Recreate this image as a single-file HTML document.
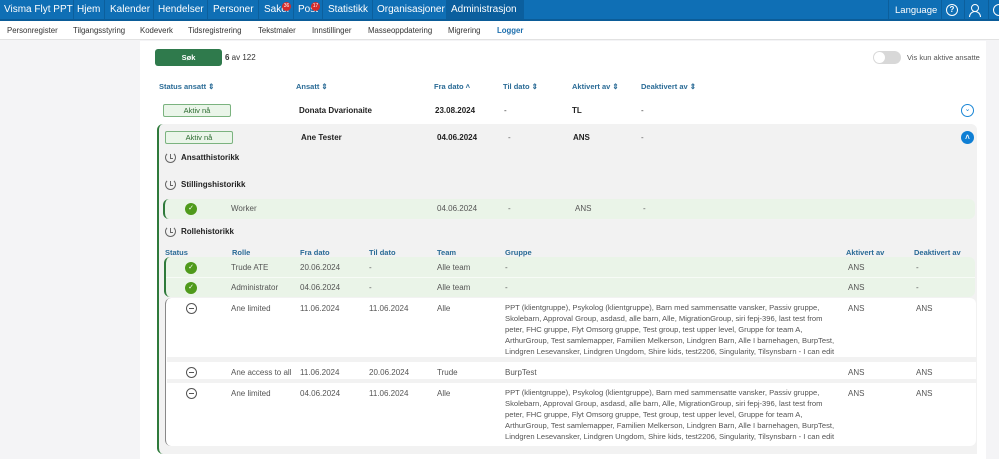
<!DOCTYPE html>
<html><head><meta charset="utf-8"><style>
*{margin:0;padding:0;box-sizing:border-box}
body{width:999px;height:459px;overflow:hidden;background:#f4f4f6;font-family:"Liberation Sans",sans-serif;font-size:8px;color:#333;position:relative}
.a{position:absolute;white-space:nowrap}
.nav{position:absolute;left:0;top:0;width:999px;height:21px;background:#0f6fb5;border-bottom:2px solid #0b5c98}
.nav span{position:absolute;top:4px;color:#fff;font-size:10px}
.sep{position:absolute;top:0;width:1px;height:19px;background:#0c5f9c}
.sub{position:absolute;left:0;top:21px;width:999px;height:19px;background:#fff;border-bottom:1px solid #e2e2e2}
.sub span{position:absolute;top:5px;font-size:7.8px;color:#333}
.main{position:absolute;left:140px;top:41px;width:846px;height:418px;background:#fff}
.h{color:#2a6b96;font-weight:bold;font-size:7.5px}
.b{font-weight:bold;color:#222}
.badge{position:absolute;height:13px;width:68px;border:1px solid #7bb37f;background:#eaf5e9;border-radius:2px;font-size:7.5px;color:#2b6a2f;text-align:center;line-height:11px}
.chk{position:absolute;width:12px;height:12px;border-radius:50%;background:#4f9a1b;color:#fff;font-size:7px;text-align:center;line-height:12px}
.min{position:absolute;width:11px;height:11px;border-radius:50%;border:1px solid #555;}
.min:after{content:"";position:absolute;left:2px;top:4px;width:5px;height:1px;background:#555}
.hist{position:absolute;width:11px;height:11px;border-radius:50%;border:1.3px solid #666;border-top-color:transparent}
.hist:after{content:"";position:absolute;left:4px;top:1px;width:2px;height:4px;border-left:1px solid #666;border-bottom:1px solid #666}
.g{color:#555}
</style></head><body>
<div class="nav">
<div class="a" style="left:446px;top:0;width:78px;height:19px;background:#0b5f9e"></div>
<div class="sep" style="left:73px"></div><div class="sep" style="left:104px"></div><div class="sep" style="left:153px"></div><div class="sep" style="left:207px"></div><div class="sep" style="left:258px"></div><div class="sep" style="left:293px"></div><div class="sep" style="left:322px"></div><div class="sep" style="left:372px"></div><div class="sep" style="left:446px"></div><div class="sep" style="left:888px"></div><div class="sep" style="left:941px"></div><div class="sep" style="left:964px"></div><div class="sep" style="left:988px"></div>
<span style="left:4px">Visma Flyt PPT</span><span style="left:77px">Hjem</span><span style="left:110px">Kalender</span><span style="left:158px">Hendelser</span><span style="left:213px">Personer</span><span style="left:264px">Saker</span><span style="left:298px">Post</span><span style="left:328px">Statistikk</span><span style="left:377px">Organisasjoner</span><span style="left:451px">Administrasjon</span>
<div class="a" style="left:282px;top:2px;width:9px;height:9px;border-radius:50%;background:#d42b2b;color:#fff;font-size:5px;text-align:center;line-height:9px">36</div>
<div class="a" style="left:311px;top:2px;width:9px;height:9px;border-radius:50%;background:#d42b2b;color:#fff;font-size:5px;text-align:center;line-height:9px">17</div>
<span style="left:895px;font-size:9.5px;top:5px">Language</span>
<div class="a" style="left:946px;top:4px;width:12px;height:12px;border:1.3px solid #fff;border-radius:50%;color:#fff;font-size:8px;text-align:center;line-height:10px;font-weight:bold">?</div>
<div class="a" style="left:971px;top:4px;width:8px;height:8px;border:1.3px solid #fff;border-radius:50%"></div>
<div class="a" style="left:969px;top:11px;width:12px;height:6px;border:1.3px solid #fff;border-radius:6px 6px 0 0;border-bottom:none"></div>
<div class="a" style="left:993px;top:4px;width:12px;height:12px;border:1.3px solid #fff;border-radius:50%"></div>
</div>
<div class="sub">
<span style="left:7px">Personregister</span><span style="left:73px">Tilgangsstyring</span><span style="left:140px">Kodeverk</span><span style="left:188px">Tidsregistrering</span><span style="left:258px">Tekstmaler</span><span style="left:312px">Innstillinger</span><span style="left:368px">Masseoppdatering</span><span style="left:448px">Migrering</span><span style="left:497px;color:#1d6fae;font-weight:bold">Logger</span>
</div>
<div class="main"></div>
<div class="a" style="left:155px;top:49px;width:67px;height:17px;background:#2f7a4c;border-radius:3px;color:#fff;font-size:7.5px;text-align:center;line-height:17px;font-weight:bold">Søk</div>
<div class="a" style="left:225px;top:53px;font-size:8px"><b>6</b> av 122</div>
<div class="a" style="left:873px;top:51px;width:28px;height:13px;background:#d8d8d8;border-radius:7px"><div style="position:absolute;left:1px;top:1px;width:11px;height:11px;border-radius:50%;background:#fff"></div></div>
<div class="a g" style="left:907px;top:53px;font-size:7.5px">Vis kun aktive ansatte</div>

<div class="a h" style="left:159px;top:82px">Status ansatt ⇕</div>
<div class="a h" style="left:296px;top:82px">Ansatt ⇕</div>
<div class="a h" style="left:434px;top:82px">Fra dato ˄</div>
<div class="a h" style="left:503px;top:82px">Til dato ⇕</div>
<div class="a h" style="left:572px;top:82px">Aktivert av ⇕</div>
<div class="a h" style="left:641px;top:82px">Deaktivert av ⇕</div>

<div class="badge" style="left:163px;top:104px">Aktiv nå</div>
<div class="a b" style="left:299px;top:106px">Donata Dvarionaite</div>
<div class="a b" style="left:435px;top:106px">23.08.2024</div>
<div class="a" style="left:504px;top:106px">-</div>
<div class="a b" style="left:572px;top:106px">TL</div>
<div class="a" style="left:641px;top:106px">-</div>
<div class="a" style="left:961px;top:104px;width:13px;height:13px;border:1.3px solid #1a86d6;border-radius:50%;color:#1a86d6;font-size:7px;text-align:center;line-height:10px">⌄</div>

<div class="a" style="left:157px;top:124px;width:820px;height:330px;background:#f2f2f2;border-left:2px solid #2f7a3b;border-radius:6px 6px 0 6px"></div>
<div class="badge" style="left:165px;top:131px">Aktiv nå</div>
<div class="a b" style="left:301px;top:133px">Ane Tester</div>
<div class="a b" style="left:437px;top:133px">04.06.2024</div>
<div class="a g" style="left:508px;top:133px">-</div>
<div class="a b" style="left:573px;top:133px">ANS</div>
<div class="a g" style="left:641px;top:133px">-</div>
<div class="a" style="left:961px;top:131px;width:13px;height:13px;background:#0f7fd4;border-radius:50%;color:#fff;font-size:8px;text-align:center;line-height:13px;font-weight:bold">˄</div>

<div class="hist" style="left:165px;top:152px"></div><div class="a b" style="left:181px;top:153px">Ansatthistorikk</div>
<div class="hist" style="left:165px;top:179px"></div><div class="a b" style="left:181px;top:180px">Stillingshistorikk</div>
<div class="a" style="left:163px;top:199px;width:812px;height:20px;background:#eaf4e8;border-left:2px solid #2f7a3b;border-radius:6px"></div>
<div class="chk" style="left:185px;top:203px">✓</div>
<div class="a g" style="left:231px;top:204px">Worker</div>
<div class="a g" style="left:437px;top:204px">04.06.2024</div>
<div class="a g" style="left:508px;top:204px">-</div>
<div class="a g" style="left:575px;top:204px">ANS</div>
<div class="a g" style="left:643px;top:204px">-</div>
<div class="hist" style="left:165px;top:226px"></div><div class="a b" style="left:181px;top:227px">Rollehistorikk</div>

<div class="a h" style="left:165px;top:248px">Status</div>
<div class="a h" style="left:232px;top:248px">Rolle</div>
<div class="a h" style="left:300px;top:248px">Fra dato</div>
<div class="a h" style="left:369px;top:248px">Til dato</div>
<div class="a h" style="left:437px;top:248px">Team</div>
<div class="a h" style="left:505px;top:248px">Gruppe</div>
<div class="a h" style="left:846px;top:248px">Aktivert av</div>
<div class="a h" style="left:914px;top:248px">Deaktivert av</div>

<div class="a" style="left:164px;top:257px;width:811px;height:40px;background:#eaf4e8;border-left:2px solid #2f7a3b;border-radius:6px"></div>
<div class="a" style="left:166px;top:277px;width:809px;height:1px;background:#f7fbf6"></div>
<div class="chk" style="left:185px;top:262px">✓</div>
<div class="chk" style="left:185px;top:282px">✓</div>
<div class="a g" style="left:231px;top:263px">Trude ATE</div><div class="a g" style="left:300px;top:263px">20.06.2024</div><div class="a g" style="left:369px;top:263px">-</div><div class="a g" style="left:437px;top:263px">Alle team</div><div class="a g" style="left:505px;top:263px">-</div><div class="a g" style="left:848px;top:263px">ANS</div><div class="a g" style="left:916px;top:263px">-</div>
<div class="a g" style="left:231px;top:283px">Administrator</div><div class="a g" style="left:300px;top:283px">04.06.2024</div><div class="a g" style="left:369px;top:283px">-</div><div class="a g" style="left:437px;top:283px">Alle team</div><div class="a g" style="left:505px;top:283px">-</div><div class="a g" style="left:848px;top:283px">ANS</div><div class="a g" style="left:916px;top:283px">-</div>

<div class="a" style="left:165px;top:298px;width:811px;height:148px;background:#fff;border-left:1.5px solid #888;border-radius:6px"></div>
<div class="a" style="left:167px;top:357px;width:809px;height:5px;background:#f2f2f2"></div>
<div class="a" style="left:167px;top:379px;width:809px;height:4px;background:#f2f2f2"></div>

<div class="min" style="left:186px;top:303px"></div>
<div class="a g" style="left:231px;top:304px">Ane limited</div><div class="a g" style="left:300px;top:304px">11.06.2024</div><div class="a g" style="left:369px;top:304px">11.06.2024</div><div class="a g" style="left:437px;top:304px">Alle</div><div class="a g" style="left:848px;top:304px">ANS</div><div class="a g" style="left:916px;top:304px">ANS</div>
<div class="a g" style="left:505px;top:302px;line-height:11px;font-size:7.6px">PPT (klientgruppe), Psykolog (klientgruppe), Barn med sammensatte vansker, Passiv gruppe,<br>Skolebarn, Approval Group, asdasd, alle barn, Alle, MigrationGroup, siri fepj-396, last test from<br>peter, FHC gruppe, Flyt Omsorg gruppe, Test group, test upper level, Gruppe for team A,<br>ArthurGroup, Test samlemapper, Familien Melkerson, Lindgren Barn, Alle I barnehagen, BurpTest,<br>Lindgren Lesevansker, Lindgren Ungdom, Shire kids, test2206, Singularity, Tilsynsbarn - I can edit</div>

<div class="min" style="left:186px;top:367px"></div>
<div class="a g" style="left:231px;top:368px">Ane access to all</div><div class="a g" style="left:300px;top:368px">11.06.2024</div><div class="a g" style="left:369px;top:368px">20.06.2024</div><div class="a g" style="left:437px;top:368px">Trude</div><div class="a g" style="left:505px;top:368px">BurpTest</div><div class="a g" style="left:848px;top:368px">ANS</div><div class="a g" style="left:916px;top:368px">ANS</div>

<div class="min" style="left:186px;top:388px"></div>
<div class="a g" style="left:231px;top:389px">Ane limited</div><div class="a g" style="left:300px;top:389px">04.06.2024</div><div class="a g" style="left:369px;top:389px">11.06.2024</div><div class="a g" style="left:437px;top:389px">Alle</div><div class="a g" style="left:848px;top:389px">ANS</div><div class="a g" style="left:916px;top:389px">ANS</div>
<div class="a g" style="left:505px;top:387px;line-height:11px;font-size:7.6px">PPT (klientgruppe), Psykolog (klientgruppe), Barn med sammensatte vansker, Passiv gruppe,<br>Skolebarn, Approval Group, asdasd, alle barn, Alle, MigrationGroup, siri fepj-396, last test from<br>peter, FHC gruppe, Flyt Omsorg gruppe, Test group, test upper level, Gruppe for team A,<br>ArthurGroup, Test samlemapper, Familien Melkerson, Lindgren Barn, Alle I barnehagen, BurpTest,<br>Lindgren Lesevansker, Lindgren Ungdom, Shire kids, test2206, Singularity, Tilsynsbarn - I can edit</div>
</body></html>
